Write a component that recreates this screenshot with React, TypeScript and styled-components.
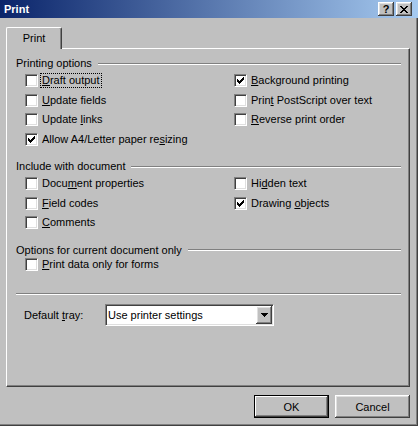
import React from "react";
import styled, { createGlobalStyle, css } from "styled-components";

const Global = createGlobalStyle`
  html, body { margin: 0; padding: 0; background: #c0c0c0; }
  body {
    font-family: "Liberation Sans", Arial, sans-serif;
    font-size: 11px;
    color: #000;
  }
  * { box-sizing: border-box; }
`;

const raised = css`
  background: #c0c0c0;
  box-shadow: inset -1px -1px #404040, inset 1px 1px #fff, inset -2px -2px #808080,
    inset 2px 2px #dfdfdf;
`;

const sunken = css`
  border: 1px solid;
  border-color: #808080 #fff #fff #808080;
  box-shadow: inset 1px 1px #404040, inset -1px -1px #dfdfdf;
`;

const Window = styled.div`
  width: 418px;
  height: 426px;
  background: #c0c0c0;
  display: flex;
  flex-direction: column;
  box-shadow: inset -1px -1px #404040, inset -2px -2px #808080;
`;

const TitleBar = styled.div`
  flex: none;
  height: 18px;
  display: flex;
  align-items: center;
  padding: 0 6px 0 4px;
  background: linear-gradient(to right, #0a246a, #a6caf0);
  color: #fff;
  font-weight: bold;
  font-size: 11px;
`;

const Title = styled.span`
  flex: 1;
`;

const CaptionButtons = styled.div`
  display: flex;
  gap: 2px;
`;

const CaptionButton = styled.div`
  ${raised};
  width: 16px;
  height: 14px;
  display: flex;
  align-items: center;
  justify-content: center;
  color: #000;
  font-weight: bold;
  font-size: 11px;
  line-height: 1;
`;

const Body = styled.div`
  flex: 1;
  display: flex;
  flex-direction: column;
  padding: 9px 8px 0 6px;
`;

const Tab = styled.div`
  position: relative;
  z-index: 1;
  align-self: flex-start;
  width: 56px;
  height: 22px;
  margin-bottom: -1px;
  padding-bottom: 1px;
  background: #c0c0c0;
  display: flex;
  align-items: center;
  justify-content: center;
  border-top: 1px solid #fff;
  border-left: 1px solid #fff;
  border-right: 1px solid #404040;
  border-top-left-radius: 2px;
  border-top-right-radius: 2px;
  box-shadow: inset -1px 0 #808080;
`;

const Panel = styled.div`
  height: 339px;
  border: 1px solid;
  border-color: #fff #404040 #404040 #fff;
  box-shadow: inset -1px -1px #808080;
  padding: 8px 8px 0 9px;
  display: flex;
  flex-direction: column;
`;

const GroupHeader = styled.div<{ $first?: boolean }>`
  display: flex;
  align-items: center;
  gap: 6px;
  height: 13px;
  line-height: 13px;
  margin-top: ${(p) => (p.$first ? 0 : 11)}px;
`;

const Etched = styled.div`
  flex: 1;
  height: 2px;
  border-top: 1px solid #808080;
  border-bottom: 1px solid #fff;
`;

const Separator = styled(Etched)`
  flex: none;
  margin-top: 19px;
`;

const Columns = styled.div<{ $tight?: boolean }>`
  display: grid;
  grid-template-columns: 209px 1fr;
  padding-left: 9px;
  margin-top: ${(p) => (p.$tight ? -2 : 1)}px;
`;

const Column = styled.div`
  display: flex;
  flex-direction: column;
`;

const Row = styled.div`
  height: 19.5px;
  display: flex;
  align-items: center;
`;

const Box = styled.span`
  ${sunken};
  flex: none;
  width: 13px;
  height: 13px;
  background: #fff;
  display: flex;
  align-items: center;
  justify-content: center;
`;

const Label = styled.span<{ $focused?: boolean }>`
  margin-left: 2px;
  padding: 0 1px;
  line-height: 13px;
  border: 1px dotted ${(p) => (p.$focused ? "#000" : "transparent")};
  white-space: nowrap;
`;

const Key = styled.span`
  text-decoration: underline;
`;

const TrayRow = styled.div`
  display: flex;
  align-items: center;
  margin-top: 9px;
  padding-left: 8px;
`;

const TrayLabel = styled.span`
  width: 81px;
`;

const Select = styled.div`
  ${sunken};
  width: 169px;
  height: 22px;
  background: #fff;
  display: flex;
  align-items: center;
  padding: 1px 1px 1px 2px;
`;

const SelectText = styled.span`
  flex: 1;
  white-space: nowrap;
`;

const ArrowButton = styled.div`
  ${raised};
  width: 16px;
  height: 18px;
  display: flex;
  align-items: center;
  justify-content: center;
`;

const Footer = styled.div`
  display: flex;
  justify-content: flex-end;
  gap: 6px;
  margin-top: 8px;
`;

const Button = styled.div<{ $default?: boolean }>`
  width: 75px;
  height: 23px;
  display: flex;
  align-items: center;
  justify-content: center;
  background: #c0c0c0;
  ${(p) =>
    p.$default
      ? css`
          border: 1px solid #000;
          box-shadow: inset -1px -1px #404040, inset 1px 1px #fff, inset -2px -2px #808080;
        `
      : css`
          box-shadow: inset -1px -1px #404040, inset 1px 1px #fff, inset -2px -2px #808080,
            inset 2px 2px #dfdfdf;
        `}
`;

const CheckMark = () => (
  <svg width="7" height="7" viewBox="0 0 7 7" shapeRendering="crispEdges">
    <path
      fill="#000"
      d="M6 0h1v1h-1z M5 1h2v1h-2z M0 2h1v1h-1z M4 2h3v1h-3z M0 3h2v1h-2z M3 3h3v1h-3z M0 4h5v1h-5z M1 5h3v1h-3z M2 6h1v1h-1z"
    />
  </svg>
);

const Access = ({ text }: { text: string }) => {
  const i = text.indexOf("&");
  if (i < 0) return <>{text}</>;
  return (
    <>
      {text.slice(0, i)}
      <Key>{text[i + 1]}</Key>
      {text.slice(i + 2)}
    </>
  );
};

type Opt = { label: string; checked?: boolean; focused?: boolean };

const Check = ({ label, checked, focused }: Opt) => (
  <Row>
    <Box>{checked && <CheckMark />}</Box>
    <Label $focused={focused}>
      <Access text={label} />
    </Label>
  </Row>
);

const Group = ({
  title,
  left,
  right,
  first,
  tight,
}: {
  title: string;
  left: Opt[];
  right: Opt[];
  first?: boolean;
  tight?: boolean;
}) => (
  <>
    <GroupHeader $first={first}>
      <span>{title}</span>
      <Etched />
    </GroupHeader>
    <Columns $tight={tight}>
      <Column>
        {left.map((o) => (
          <Check key={o.label} {...o} />
        ))}
      </Column>
      <Column>
        {right.map((o) => (
          <Check key={o.label} {...o} />
        ))}
      </Column>
    </Columns>
  </>
);

export default function App() {
  return (
    <>
      <Global />
      <Window>
        <TitleBar>
          <Title>Print</Title>
          <CaptionButtons>
            <CaptionButton>?</CaptionButton>
            <CaptionButton>
              <svg width="8" height="7" viewBox="0 0 8 7" shapeRendering="crispEdges">
                <path
                  fill="#000"
                  d="M0 0h2v1h-2z M6 0h2v1h-2z M1 1h2v1h-2z M5 1h2v1h-2z M2 2h4v1h-4z M3 3h2v1h-2z M2 4h4v1h-4z M1 5h2v1h-2z M5 5h2v1h-2z M0 6h2v1h-2z M6 6h2v1h-2z"
                />
              </svg>
            </CaptionButton>
          </CaptionButtons>
        </TitleBar>
        <Body>
          <Tab>Print</Tab>
          <Panel>
            <Group
              first
              title="Printing options"
              left={[
                { label: "&Draft output", focused: true },
                { label: "&Update fields" },
                { label: "Update &links" },
                { label: "Allow A4/Letter paper re&sizing", checked: true },
              ]}
              right={[
                { label: "&Background printing", checked: true },
                { label: "Prin&t PostScript over text" },
                { label: "&Reverse print order" },
              ]}
            />
            <Group
              title="Include with document"
              left={[
                { label: "Docu&ment properties" },
                { label: "&Field codes" },
                { label: "&Comments" },
              ]}
              right={[
                { label: "Hi&dden text" },
                { label: "Drawing &objects", checked: true },
              ]}
            />
            <Group
              tight
              title="Options for current document only"
              left={[{ label: "&Print data only for forms" }]}
              right={[]}
            />
            <Separator />
            <TrayRow>
              <TrayLabel>
                <Access text="Default &tray:" />
              </TrayLabel>
              <Select>
                <SelectText>Use printer settings</SelectText>
                <ArrowButton>
                  <svg width="7" height="4" viewBox="0 0 7 4" shapeRendering="crispEdges">
                    <path fill="#000" d="M0 0h7v1h-7z M1 1h5v1h-5z M2 2h3v1h-3z M3 3h1v1h-1z" />
                  </svg>
                </ArrowButton>
              </Select>
            </TrayRow>
          </Panel>
          <Footer>
            <Button $default>OK</Button>
            <Button>Cancel</Button>
          </Footer>
        </Body>
      </Window>
    </>
  );
}
